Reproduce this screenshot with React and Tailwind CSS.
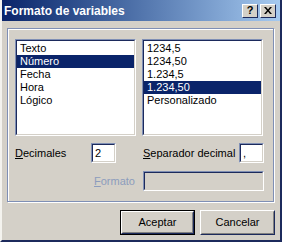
import React from "react";

const font = { fontFamily: '"Liberation Sans", Arial, sans-serif' };

function ListBox({ items, selected }) {
  return (
    <div className="w-[121px] h-[97px] border border-t-[#7f8fb5] border-l-[#7f8fb5] border-r-white border-b-white">
      <div className="w-full h-full bg-white border border-t-[#1c2a5c] border-l-[#1c2a5c] border-r-[#d4d0c8] border-b-[#d4d0c8] pt-[1px]">
        {items.map((t, i) => (
          <div
            key={t}
            className={
              "h-[13px] leading-[13px] pl-[3px] text-[11px] " +
              (i === selected ? "bg-[#0a246a] text-white" : "text-black")
            }
          >
            {t}
          </div>
        ))}
      </div>
    </div>
  );
}

function Input({ w, value, disabled }) {
  return (
    <div
      className={
        "h-[20px] border border-t-[#7f8fb5] border-l-[#7f8fb5] border-r-white border-b-white " +
        w
      }
    >
      <div
        className={
          "w-full h-full border border-t-[#1c2a5c] border-l-[#1c2a5c] border-r-[#d4d0c8] border-b-[#d4d0c8] text-[11px] leading-[16px] pl-[2px] " +
          (disabled ? "bg-[#d4d0c8]" : "bg-white")
        }
      >
        {value}
      </div>
    </div>
  );
}

function Button({ children, def }) {
  return (
    <div
      className={
        "w-[75px] h-[25px] " + (def ? "border border-black" : "")
      }
    >
      <div className="w-full h-full border border-t-white border-l-white border-r-[#1c2a5c] border-b-[#1c2a5c]">
        <div className="w-full h-full border border-t-[#d4d0c8] border-l-[#d4d0c8] border-r-[#808080] border-b-[#808080] flex items-center justify-center text-[11px] text-black">
          {children}
        </div>
      </div>
    </div>
  );
}

function TitleBtn({ children }) {
  return (
    <div className="w-[16px] h-[14px] bg-[#d4d0c8] border border-t-white border-l-white border-r-[#1c2a5c] border-b-[#1c2a5c] flex items-center justify-center text-[11px] font-bold leading-none text-black">
      {children}
    </div>
  );
}

export default function App() {
  return (
    <div
      style={font}
      className="w-[282px] h-[242px] bg-[#d4d0c8] border-l-2 border-l-[#f4f3ef] border-r-2 border-r-[#1c2a5c] border-b-2 border-b-[#1c2a5c] flex flex-col overflow-hidden"
    >
      <div className="h-[21px] bg-gradient-to-r from-[#0a246a] to-[#a6caf0] flex items-center pl-[2px] pr-[2px]">
        <div className="text-white font-bold text-[12px] flex-1 leading-none pt-[1px]">
          Formato de variables
        </div>
        <div className="flex gap-[2px] mr-[2px]">
          <TitleBtn>?</TitleBtn>
          <TitleBtn>
            <svg width="8" height="7" viewBox="0 0 8 7">
              <path d="M0 0h2l2 2.5L6 0h2L5 3.5 8 7H6L4 4.5 2 7H0l3-3.5z" fill="#000" />
            </svg>
          </TitleBtn>
        </div>
      </div>

      <div className="ml-[5px] mt-[7px] w-[267px] h-[174px] border border-[#7f8fb5] shadow-[inset_1px_1px_0_#fff,1px_1px_0_#fff] px-[7px] pt-[10px]">
        <div className="flex gap-[6px]">
          <ListBox items={["Texto", "Número", "Fecha", "Hora", "Lógico"]} selected={1} />
          <ListBox
            items={["1234,5", "1234,50", "1.234,5", "1.234,50", "Personalizado"]}
            selected={3}
          />
        </div>
        <div className="flex items-center mt-[7px] text-[11px] text-black">
          <div className="w-[76px]">
            <span className="underline">D</span>ecimales
          </div>
          <Input w="w-[25px]" value="2" />
          <div className="ml-[27px] w-[96px]">
            <span className="underline">S</span>eparador decimal
          </div>
          <Input w="w-[25px]" value="," />
        </div>
        <div className="flex items-center mt-[8px] text-[11px]">
          <div className="w-[128px] text-right pr-[8px] text-[#8c9cbd]">
            <span className="underline">F</span>ormato
          </div>
          <Input w="w-[121px]" value="" disabled />
        </div>
      </div>

      <div className="flex justify-end gap-[5px] mt-[8px] mr-[5px]">
        <Button def>Aceptar</Button>
        <Button>Cancelar</Button>
      </div>
    </div>
  );
}
